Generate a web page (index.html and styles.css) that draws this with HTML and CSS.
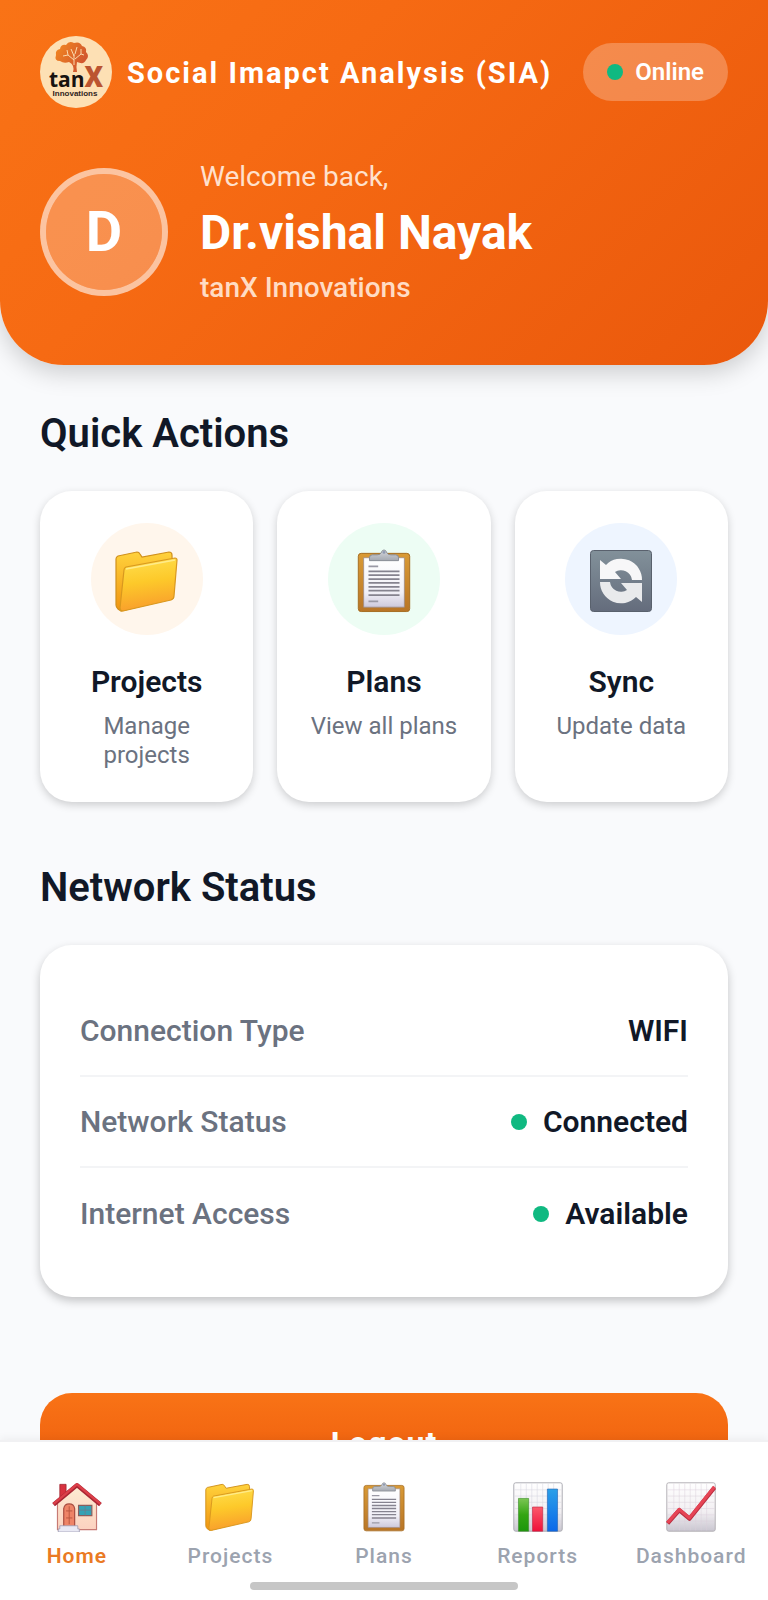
FILE: index.html
```html
<!DOCTYPE html>
<html lang="en">
<head>
<meta charset="utf-8">
<meta name="viewport" content="width=device-width, initial-scale=1">
<title>Social Imapct Analysis (SIA)</title>
<link rel="stylesheet" href="styles.css">
</head>
<body>
<svg class="defs" aria-hidden="true">
  <defs>
    <linearGradient id="g-back" x1="0" y1="0" x2="0" y2="1"><stop offset="0" stop-color="#ffd23c"/><stop offset="1" stop-color="#f0930f"/></linearGradient>
    <linearGradient id="g-front" x1="0" y1="0" x2="0.15" y2="1"><stop offset="0" stop-color="#ffe04f"/><stop offset="0.5" stop-color="#fdc92a"/><stop offset="1" stop-color="#f9a02c"/></linearGradient>
    <linearGradient id="g-board" x1="0" y1="0" x2="0" y2="1"><stop offset="0" stop-color="#d99a35"/><stop offset="1" stop-color="#b87527"/></linearGradient>
    <linearGradient id="g-paper" x1="0" y1="0" x2="0" y2="1"><stop offset="0" stop-color="#ffffff"/><stop offset="0.7" stop-color="#f1f0f7"/><stop offset="1" stop-color="#cdc9dc"/></linearGradient>
    <linearGradient id="g-clip" x1="0" y1="0" x2="0" y2="1"><stop offset="0" stop-color="#d5d8dd"/><stop offset="1" stop-color="#a4a8b0"/></linearGradient>
    <linearGradient id="g-sync" x1="0" y1="0" x2="0" y2="1"><stop offset="0" stop-color="#82919a"/><stop offset="1" stop-color="#646c7c"/></linearGradient>
    <linearGradient id="g-wall" x1="0" y1="0" x2="0" y2="1"><stop offset="0" stop-color="#fdebd2"/><stop offset="1" stop-color="#fcd2c0"/></linearGradient>
    <linearGradient id="g-chart" x1="0" y1="0" x2="0" y2="1"><stop offset="0" stop-color="#ffffff"/><stop offset="0.6" stop-color="#f2eff2"/><stop offset="1" stop-color="#c9c6d0"/></linearGradient>
    <linearGradient id="g-green" x1="0" y1="0" x2="0" y2="1"><stop offset="0" stop-color="#7cc653"/><stop offset="0.5" stop-color="#33a512"/><stop offset="1" stop-color="#1c960a"/></linearGradient>
    <linearGradient id="g-red" x1="0" y1="0" x2="0" y2="1"><stop offset="0" stop-color="#fb5a6c"/><stop offset="1" stop-color="#ef1039"/></linearGradient>
    <linearGradient id="g-blue" x1="0" y1="0" x2="0" y2="1"><stop offset="0" stop-color="#2ba0e8"/><stop offset="1" stop-color="#0a68ea"/></linearGradient>
    <linearGradient id="g-tree" x1="0" y1="0" x2="1" y2="0.6"><stop offset="0" stop-color="#f58a1f"/><stop offset="1" stop-color="#cf5330"/></linearGradient>
    <symbol id="folder" viewBox="0 0 64 64">
      <path d="M3 7 22 3q2 0 3 2l2 3 27-5q3 0 3 3l1 43L6 62 3 60Q1 58 1 56V10q0-2 2-3Z" fill="url(#g-back)" stroke="#d0901d" stroke-width="1.2"/>
      <path d="M11 18 60 9q2 0 2 2l-3 36q0 3-3 4L8 62q-3 0-3-3l4-38q0-2 2-3Z" fill="url(#g-front)" stroke="#d9981f" stroke-width="1.2" stroke-linejoin="round"/>
      <path d="M11 20 60 11" stroke="#ffeb8a" stroke-width="1.6" fill="none"/>
    </symbol>
    <symbol id="clipboard" viewBox="0 0 64 66">
      <rect x="5.500" y="4.500" width="53" height="60" rx="3" fill="url(#g-board)" stroke="#a66c20"/>
      <path d="M11 9h42v51H11Z" fill="url(#g-paper)" stroke="#9d8a87" stroke-width="0.8"/>
      <path d="M16 18h10M16 54h10" stroke="#9a99a5" stroke-width="1.8"/>
      <path d="M16 23h32M16 27h32M16 31h32M16 35h32M16 39h32M16 43h32M16 47.500h32" stroke="#85838f" stroke-width="1.7"/>
      <path d="M17 12V9q0-3 3-3h5q3 0 4-2 1-3 3-3t3 3q1 2 4 2h5q3 0 3 3v3Z" fill="url(#g-clip)" stroke="#878b94" stroke-width="1"/>
      <circle cx="32" cy="3.500" r="1.500" fill="#8f9ab2"/>
    </symbol>
    <symbol id="sync" viewBox="0 0 64 64">
      <rect x="1.500" y="1.500" width="61" height="61" rx="3" fill="url(#g-sync)" stroke="#59616d"/>
      <path d="M11 11 17 16A21 21 0 0 1 53 31H43A11 11 0 0 0 26 23L32 30H11Z" fill="#f7f7f8"/>
      <path d="M53 53 47 48A21 21 0 0 1 11 33H21A11 11 0 0 0 38 41L32 34H53Z" fill="#e9eaec"/>
    </symbol>
    <symbol id="house" viewBox="0 0 64 64">
      <path d="M10 3h8v18h-8Z" fill="#d8323f" stroke="#9e2430" stroke-width="1"/>
      <path d="M7 25 32 5l25 20v36H7Z" fill="url(#g-wall)" stroke="#c77a74" stroke-width="1.500"/>
      <path d="M2 29 32 4l30 25" fill="none" stroke="#a92533" stroke-width="5.500" stroke-linejoin="round"/>
      <path d="M2 28 32 3l30 25" fill="none" stroke="#dc3f49" stroke-width="3.200" stroke-linejoin="round"/>
      <path d="M15 57V34q1-6 7-6t7 6v23Z" fill="#ee8467" stroke="#a84c40" stroke-width="1.500"/>
      <path d="M18 37h8M18 46h8M22 31v23" stroke="#b9553f" stroke-width="1.200"/>
      <path d="M34 30h17v13H34Z" fill="#35a2b5" stroke="#8c5d5b" stroke-width="1.500"/>
      <path d="M42.500 30v13M34 36h17" stroke="#6b7d8c" stroke-width="1"/>
      <path d="M10 56h23v4h2v4H8v-4h2Z" fill="#e9e9f4" stroke="#9c9ab2" stroke-width="1"/>
    </symbol>
    <symbol id="bars" viewBox="0 0 64 64">
      <rect x="1" y="1" width="62" height="62" rx="2.500" fill="url(#g-chart)" stroke="#a9a9b0" stroke-width="1.200"/>
      <path d="M10 2v60M17 2v60M24 2v60M31 2v60M38 2v60M45 2v60M52 2v60M2 10h60M2 18h60M2 26h60M2 34h60M2 42h60M2 50h60" stroke="#d2d2dc" stroke-width="0.600"/>
      <path d="M7 21h13v42H7Z" fill="url(#g-green)" stroke="#3d8e2d" stroke-width="0.800"/>
      <path d="M25 32h13v31H25Z" fill="url(#g-red)" stroke="#c22342" stroke-width="0.800"/>
      <path d="M44 9h13v54H44Z" fill="url(#g-blue)" stroke="#2464b4" stroke-width="0.800"/>
    </symbol>
    <symbol id="trend" viewBox="0 0 64 64">
      <rect x="1" y="1" width="62" height="62" rx="2.500" fill="url(#g-chart)" stroke="#b0adb2" stroke-width="1.200"/>
      <path d="M10 2v60M17 2v60M24 2v60M31 2v60M38 2v60M45 2v60M52 2v60M2 10h60M2 18h60M2 26h60M2 34h60M2 42h60M2 50h60" stroke="#dbd0da" stroke-width="0.600"/>
      <path d="M2 53 17 36 30 47 62 7" fill="none" stroke="#b92e40" stroke-width="5.500" stroke-linejoin="round"/>
      <path d="M2 52 17 35 30 46 62 6" fill="none" stroke="#e64455" stroke-width="4" stroke-linejoin="round"/>
    </symbol>
  </defs>
</svg>
<div class="app">
  <div class="scroll">
    <header class="hero">
      <div class="topbar">
        <svg class="logo" viewBox="0 0 72 72" role="img" aria-label="tanX Innovations logo">
          <circle cx="36" cy="36" r="36" fill="#fde0b4"/>
          <path d="M29 26Q24 28 20 25 14 25 16 19 15 14 20 13 21 8 26 9 29 4 34 7 40 5 42 10 47 11 46 16 50 20 46 24 44 29 37 26 36 30 37 36H33Q35 29 29 26Z" fill="url(#g-tree)"/>
          <path d="M34 29V18M34 24l-6-5-5 1M28 19l-1-5M34 20l-3-7M35 23l6-5 3 1M41 18v-5M35 18l2-7" fill="none" stroke="#fbd9ac" stroke-width="1"/>
          <text class="logo-name" x="9" y="51">tan<tspan class="logo-x">X</tspan></text>
          <text class="logo-sub" x="35" y="60" text-anchor="middle">Innovations</text>
        </svg>
        <h1 class="app-title">Social Imapct Analysis (SIA)</h1>
        <div class="pill"><span class="dot"></span>Online</div>
      </div>
      <div class="profile">
        <div class="avatar">D</div>
        <div class="greeting">
          <p class="welcome">Welcome back,</p>
          <p class="user-name">Dr.vishal Nayak</p>
          <p class="org">tanX Innovations</p>
        </div>
      </div>
    </header>
    <main class="content">
      <section>
        <h2 class="section-title">Quick Actions</h2>
        <div class="actions">
          <button class="action" type="button">
            <span class="bubble bubble-orange"><svg class="emoji"><use href="#folder"/></svg></span>
            <span class="action-title">Projects</span>
            <span class="action-sub">Manage projects</span>
          </button>
          <button class="action" type="button">
            <span class="bubble bubble-green"><svg class="emoji"><use href="#clipboard"/></svg></span>
            <span class="action-title">Plans</span>
            <span class="action-sub">View all plans</span>
          </button>
          <button class="action" type="button">
            <span class="bubble bubble-blue"><svg class="emoji"><use href="#sync"/></svg></span>
            <span class="action-title">Sync</span>
            <span class="action-sub">Update data</span>
          </button>
        </div>
      </section>
      <section>
        <h2 class="section-title">Network Status</h2>
        <dl class="status">
          <div class="row"><dt>Connection Type</dt><dd>WIFI</dd></div>
          <div class="row"><dt>Network Status</dt><dd><span class="dot"></span>Connected</dd></div>
          <div class="row"><dt>Internet Access</dt><dd><span class="dot"></span>Available</dd></div>
        </dl>
      </section>
      <button class="logout" type="button">Logout</button>
    </main>
  </div>
  <nav class="tabs">
    <div class="tab-list">
      <a class="tab active" href="#home" aria-current="page"><svg class="tab-icon"><use href="#house"/></svg>Home</a>
      <a class="tab" href="#projects"><svg class="tab-icon"><use href="#folder"/></svg>Projects</a>
      <a class="tab" href="#plans"><svg class="tab-icon"><use href="#clipboard"/></svg>Plans</a>
      <a class="tab" href="#reports"><svg class="tab-icon"><use href="#bars"/></svg>Reports</a>
      <a class="tab" href="#dashboard"><svg class="tab-icon"><use href="#trend"/></svg>Dashboard</a>
    </div>
    <div class="home-bar"></div>
  </nav>
</div>
</body>
</html>
```

FILE: styles.css
```css
* { box-sizing: border-box; }
body, h1, h2, p, dl, dd { margin: 0; }
body { font-family: Roboto, "Liberation Sans", sans-serif; background: #f9fafc; color: #111827; }
button { font: inherit; border: 0; cursor: pointer; }
.defs { position: absolute; width: 0; height: 0; }

.app { display: flex; flex-direction: column; height: 100vh; }
.scroll { flex: 1; min-height: 0; overflow-y: auto; scrollbar-width: none; }

.hero {
  padding: 36px 40px 60px;
  border-radius: 0 0 64px 64px;
  background: linear-gradient(135deg, #f97316 0%, #f66a13 35%, #ea580c 100%);
  box-shadow: 0 8px 24px rgba(0, 0, 0, 0.18);
  color: #fff;
}
.topbar { display: flex; align-items: center; gap: 15px; }
.logo { width: 72px; height: 72px; flex: none; }
.logo-name { font: 700 21px "Open Sans", sans-serif; fill: #17120f; }
.logo-x { font: 900 29px Roboto, sans-serif; fill: #bb5430; }
.logo-sub { font: 700 8px "Liberation Sans", sans-serif; fill: #30231c; }
.app-title { flex: 1; padding-top: 2px; font-size: 29px; line-height: 36px; font-weight: 700; letter-spacing: 2px; white-space: nowrap; }
.pill {
  display: flex; align-items: center; gap: 12px;
  height: 58px; padding: 0 24px; border-radius: 32px;
  background: rgba(255, 255, 255, 0.25);
  font-size: 24px; font-weight: 600;
}
.dot { width: 16px; height: 16px; border-radius: 50%; background: #10b981; flex: none; }

.profile { display: flex; align-items: center; gap: 32px; margin-top: 51px; }
.avatar {
  display: flex; align-items: center; justify-content: center;
  width: 128px; height: 128px; flex: none;
  border: 6px solid rgba(255, 255, 255, 0.6); border-radius: 50%;
  background: rgba(255, 255, 255, 0.25); background-clip: padding-box;
  font-size: 56px; font-weight: 700;
}
.welcome { font-size: 28px; line-height: 36px; color: #ffe1cd; }
.user-name { margin: 9px 0; font-size: 48px; line-height: 58px; font-weight: 700; }
.org { font-size: 28px; line-height: 34px; font-weight: 500; color: #ffdcc4; }

.content { padding: 44px 40px 64px; }
.section-title { margin-bottom: 32px; font-size: 40px; line-height: 50px; font-weight: 600; }
.actions { display: grid; grid-template-columns: repeat(3, 1fr); gap: 24px; margin-bottom: 61px; }
.action {
  display: flex; flex-direction: column; align-items: center;
  padding: 32px 24px; border-radius: 32px; background: #fff; color: #111827;
  box-shadow: 0 3px 8px rgba(0, 0, 0, 0.18);
}
.bubble { display: flex; align-items: center; justify-content: center; width: 112px; height: 112px; border-radius: 50%; padding-top: 4px; }
.bubble-orange { background: #fff6ec; }
.bubble-green { background: #edfdf4; }
.bubble-blue { background: #eef5ff; }
.emoji { width: 64px; height: 64px; }
.action-title { margin-top: 29px; font-size: 30px; line-height: 36px; font-weight: 600; }
.action-sub { margin-top: 12px; max-width: 150px; font-size: 24px; line-height: 29px; color: #6b7280; }

.status { padding: 41px 40px 38px; border-radius: 32px; background: #fff; box-shadow: 0 4px 10px rgba(0, 0, 0, 0.22); }
.row { display: flex; align-items: center; justify-content: space-between; height: 91px; border-bottom: 2px solid #f3f4f6; font-size: 30px; }
.row:last-child { border-bottom: 0; }
.row dt { font-weight: 500; color: #6b7280; }
.row dd { display: flex; align-items: center; gap: 16px; font-weight: 600; }

.logout {
  display: block; width: 100%; height: 100px; margin-top: 96px; border-radius: 32px;
  background: linear-gradient(180deg, #f97316 0%, #ea580c 100%);
  color: #fff; font-size: 32px; font-weight: 700; letter-spacing: 1px;
}

.tabs { flex: none; padding: 40px 0 10px; border-top: 2px solid #f1f1f3; background: #fff; box-shadow: 0 -2px 8px rgba(0, 0, 0, 0.05); }
.tab-list { display: grid; grid-template-columns: repeat(5, 1fr); }
.tab { display: flex; flex-direction: column; align-items: center; gap: 11px; color: #9ca3af; font-size: 21px; line-height: 26px; font-weight: 500; letter-spacing: 1px; text-decoration: none; }
.tab.active { color: #ea7a24; font-weight: 600; }
.tab-icon { width: 50px; height: 50px; }
.home-bar { width: 35%; height: 8px; margin: 13px auto 0; border-radius: 4px; background: #c6c6c6; }
```
